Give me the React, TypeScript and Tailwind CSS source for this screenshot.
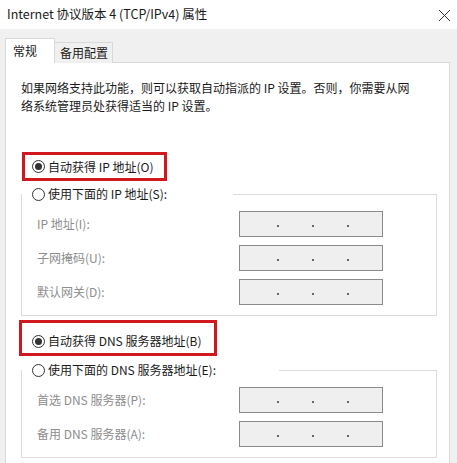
import React from "react";

const font = { fontFamily: '"Noto Sans CJK SC", "Noto Sans", sans-serif' };

function Radio({ checked }: { checked?: boolean }) {
    return (
        <span className="flex h-[13px] w-[13px] shrink-0 items-center justify-center rounded-full border border-[#333333] bg-white">
            {checked && <span className="h-[7px] w-[7px] rounded-full bg-[#333333]" />}
        </span>
    );
}

function IpInput() {
    return (
        <div className="flex h-[26px] w-[144px] items-center gap-[33px] border border-[#8a8a8a] bg-[#efefef] pl-[37px] pt-[3px]">
            <span className="h-[2px] w-[2px] bg-[#666666]" />
            <span className="h-[2px] w-[2px] bg-[#666666]" />
            <span className="h-[2px] w-[2px] bg-[#666666]" />
        </div>
    );
}

function FieldRow({ label }: { label: string }) {
    return (
        <div className="flex h-[26px] items-center">
            <span className="w-[217px] pl-[15px] text-[12px] text-[#8d8d8d]">{label}</span>
            <IpInput />
        </div>
    );
}

function GroupBox({ title, legendWidth, rows }: { title: string; legendWidth: string; rows: string[] }) {
    return (
        <fieldset className="w-[416px] border border-[#dcdcdc] pb-[10px]">
            <legend className={`flex h-[18px] items-center gap-[3px] pl-[10px] text-[12px] text-[#1a1a1a] ${legendWidth}`}>
                <Radio />
                <span>{title}</span>
            </legend>
            <div className="flex flex-col gap-[8px] pt-[8px]">
                {rows.map(r => (
                    <FieldRow key={r} label={r} />
                ))}
            </div>
        </fieldset>
    );
}

export default function App() {
    return (
        <div className="h-[463px] w-[457px] overflow-hidden bg-[#f0f0f0]" style={font}>
            {/* title bar */}
            <div className="flex h-[29px] items-center justify-between bg-white pl-[7px] pr-[6px]">
                <span className="text-[12.5px] text-[#1a1a1a]">Internet 协议版本 4 (TCP/IPv4) 属性</span>
                <svg width="13" height="13" viewBox="0 0 13 13" className="mt-[1px]">
                    <path d="M1 1 L12 12 M12 1 L1 12" stroke="#333333" strokeWidth="1" />
                </svg>
            </div>

            <div className="pl-[5px] pt-[9px]">
                {/* tabs */}
                <div className="relative z-10 -mb-px flex items-end">
                    <div className="flex h-[25px] w-[50px] items-center border border-b-0 border-[#d9d9d9] bg-white pl-[7px] text-[12px] text-[#1a1a1a]">
                        常规
                    </div>
                    <div className="flex h-[21px] w-[58px] items-center border border-b-0 border-l-0 border-[#d9d9d9] bg-[#f0f0f0] pl-[5px] text-[12px] text-[#1a1a1a]">
                        备用配置
                    </div>
                </div>

                {/* panel */}
                <div className="h-[420px] w-[445px] border border-[#d9d9d9] bg-white pl-[15px] pt-[16px]">
                    <p className="w-[400px] text-[12px] leading-[18px] text-[#1a1a1a]">
                        如果网络支持此功能，则可以获取自动指派的 IP 设置。否则，你需要从网络系统管理员处获得适当的 IP 设置。
                    </p>

                    <div className="ml-[1px] mt-[37px] flex h-[29px] w-[145px] items-center gap-[3px] border-[3px] border-[#d0191f] pl-[7px] text-[12px] text-[#1a1a1a]">
                        <Radio checked />
                        <span>自动获得 IP 地址(O)</span>
                    </div>

                    <div className="mt-[4px]">
                        <GroupBox
                            title="使用下面的 IP 地址(S):"
                            legendWidth="w-[211px]"
                            rows={["IP 地址(I):", "子网掩码(U):", "默认网关(D):"]}
                        />
                    </div>

                    <div className="-ml-[2px] mt-[4px] flex h-[36px] w-[198px] items-center gap-[3px] border-[3px] border-[#d0191f] pl-[10px] pt-[6px] text-[12px] text-[#1a1a1a]">
                        <Radio checked />
                        <span>自动获得 DNS 服务器地址(B)</span>
                    </div>

                    <div className="mt-[5px]">
                        <GroupBox
                            title="使用下面的 DNS 服务器地址(E):"
                            legendWidth="w-[257px]"
                            rows={["首选 DNS 服务器(P):", "备用 DNS 服务器(A):"]}
                        />
                    </div>
                </div>
            </div>
        </div>
    );
}
